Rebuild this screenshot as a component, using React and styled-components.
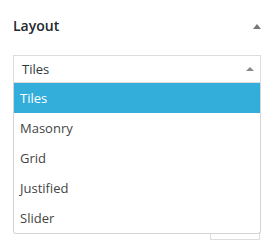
import React from "react";
import styled, { createGlobalStyle } from "styled-components";

const GlobalStyle = createGlobalStyle`
  html, body { margin: 0; padding: 0; background: #fff; }
  body { font-family: "Open Sans", "Noto Sans", sans-serif; }
`;

const Panel = styled.div`
  width: 275px;
  box-sizing: border-box;
  padding: 16px 14px 0 13px;
`;

const Header = styled.div`
  display: flex;
  align-items: center;
  justify-content: space-between;
  height: 20px;
`;

const Title = styled.h3`
  margin: 0;
  font-size: 14px;
  font-weight: 600;
  color: #23282d;
  line-height: 20px;
`;

const Caret = styled.span`
  display: block;
  width: 0;
  height: 0;
  border-left: ${(p) => p.$w}px solid transparent;
  border-right: ${(p) => p.$w}px solid transparent;
  border-bottom: ${(p) => p.$h}px solid ${(p) => p.$color};
  margin-right: ${(p) => p.$mr}px;
`;

const SelectBox = styled.div`
  position: relative;
  margin-top: 19px;
  height: 28px;
  box-sizing: border-box;
  border: 1px solid #ddd;
  display: flex;
  align-items: center;
  justify-content: space-between;
  padding: 0 5px 0 8px;
  font-size: 13px;
  color: #32373c;
`;

const Dropdown = styled.ul`
  position: absolute;
  top: 27px;
  left: -1px;
  right: -1px;
  margin: 0;
  padding: 0;
  list-style: none;
  background: #fff;
  border: 1px solid #d4d4d4;
  border-top: none;
  border-radius: 0 0 3px 3px;
  z-index: 2;
`;

const Option = styled.li`
  height: 30px;
  display: flex;
  align-items: center;
  padding-left: 6px;
  font-size: 13px;
  color: ${(p) => (p.$active ? "#fff" : "#444")};
  background: ${(p) => (p.$active ? "#33aedb" : "transparent")};
`;

const ButtonRow = styled.div`
  display: flex;
  justify-content: flex-end;
  margin-top: 131px;
  padding-right: 1px;
`;

const Button = styled.button`
  width: 50px;
  height: 26px;
  box-sizing: border-box;
  border: 1px solid #ddd;
  background: #fff;
`;

const options = ["Tiles", "Masonry", "Grid", "Justified", "Slider"];

export default function App() {
  return (
    <>
      <GlobalStyle />
      <Panel>
        <Header>
          <Title>Layout</Title>
          <Caret $w={4} $h={5} $color="#777" $mr={0} />
        </Header>
        <SelectBox>
          <span>Tiles</span>
          <Caret $w={4} $h={4} $color="#888" $mr={1} />
          <Dropdown>
            {options.map((o, i) => (
              <Option key={o} $active={i === 0}>
                {o}
              </Option>
            ))}
          </Dropdown>
        </SelectBox>
        <ButtonRow>
          <Button aria-label="action" />
        </ButtonRow>
      </Panel>
    </>
  );
}
